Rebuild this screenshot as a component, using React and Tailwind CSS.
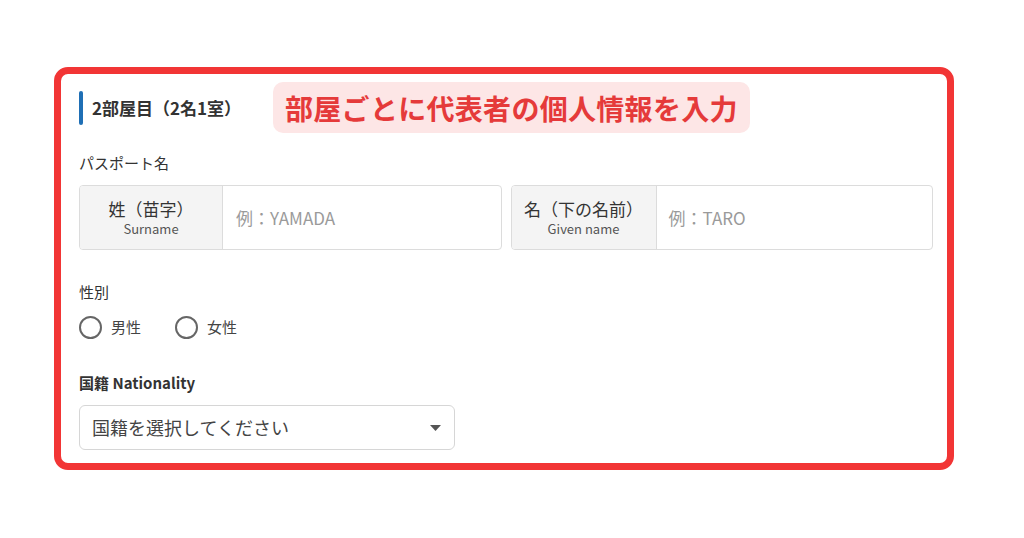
export default function App() {
  const font = { fontFamily: '"Noto Sans CJK JP", "Noto Sans", sans-serif' };

  return (
    <div
      className="w-[1024px] h-[538px] bg-white pt-[67px] pl-[54px]"
      style={font}
    >
      <div className="w-[900px] border-[7px] border-[#f23535] rounded-[14px] bg-white pl-[18px] pr-[14px] pt-[8px] pb-[13px]">

        {/* header row */}
        <div className="flex items-center">
          <div className="w-[194px] flex items-center gap-[9px]">
            <div className="w-[4px] h-[34px] bg-[#1f6fb5] rounded-full" />
            <h2 className="text-[17px] font-bold text-[#333] leading-none">
              2部屋目（2名1室）
            </h2>
          </div>
          <div className="h-[51px] px-[12px] flex items-center bg-[#fde6e6] rounded-[10px]">
            <span className="text-[28px] font-bold text-[#e53a3a] leading-none tracking-[0.3px]">
              部屋ごとに代表者の個人情報を入力
            </span>
          </div>
        </div>

        {/* passport name */}
        <p className="mt-[19px] text-[15px] leading-[22px] text-[#333]">
          パスポート名
        </p>

        <div className="mt-[11px] flex gap-[9px]">
          <div className="flex-1 h-[65px] flex border border-[#dcdcdc] rounded-[4px] overflow-hidden">
            <div className="w-[143px] shrink-0 bg-[#f4f4f4] border-r border-[#dcdcdc] flex flex-col items-center justify-center">
              <span className="text-[17px] leading-[22px] text-[#333]">姓（苗字）</span>
              <span className="text-[13px] leading-[17px] text-[#555]">Surname</span>
            </div>
            <div className="flex-1 flex items-center pl-[13px] text-[17px] text-[#9a9a9a]">
              例：YAMADA
            </div>
          </div>
          <div className="flex-1 h-[65px] flex border border-[#dcdcdc] rounded-[4px] overflow-hidden">
            <div className="w-[145px] shrink-0 bg-[#f4f4f4] border-r border-[#dcdcdc] flex flex-col items-center justify-center">
              <span className="text-[17px] leading-[22px] text-[#333]">名（下の名前）</span>
              <span className="text-[13px] leading-[17px] text-[#555]">Given name</span>
            </div>
            <div className="flex-1 flex items-center pl-[12px] text-[17px] text-[#9a9a9a]">
              例：TARO
            </div>
          </div>
        </div>

        {/* gender */}
        <p className="mt-[31px] text-[15px] leading-[22px] text-[#333]">性別</p>
        <div className="mt-[12px] flex items-center h-[24px]">
          <div className="flex items-center gap-[9px]">
            <span className="w-[23px] h-[23px] rounded-full border-2 border-[#666]" />
            <span className="text-[15px] text-[#444]">男性</span>
          </div>
          <div className="ml-[34px] flex items-center gap-[9px]">
            <span className="w-[23px] h-[23px] rounded-full border-2 border-[#666]" />
            <span className="text-[15px] text-[#444]">女性</span>
          </div>
        </div>

        {/* nationality */}
        <p className="mt-[33px] text-[15px] leading-[22px] font-bold text-[#333]">
          国籍 Nationality
        </p>
        <div className="mt-[11px] w-[376px] h-[45px] border border-[#d6d6d6] rounded-[6px] flex items-center justify-between pl-[12px] pr-[13px]">
          <span className="text-[18px] text-[#444]">国籍を選択してください</span>
          <svg width="11" height="6" viewBox="0 0 11 6">
            <path d="M0 0 L11 0 L5.5 6 Z" fill="#555" />
          </svg>
        </div>

      </div>
    </div>
  );
}
